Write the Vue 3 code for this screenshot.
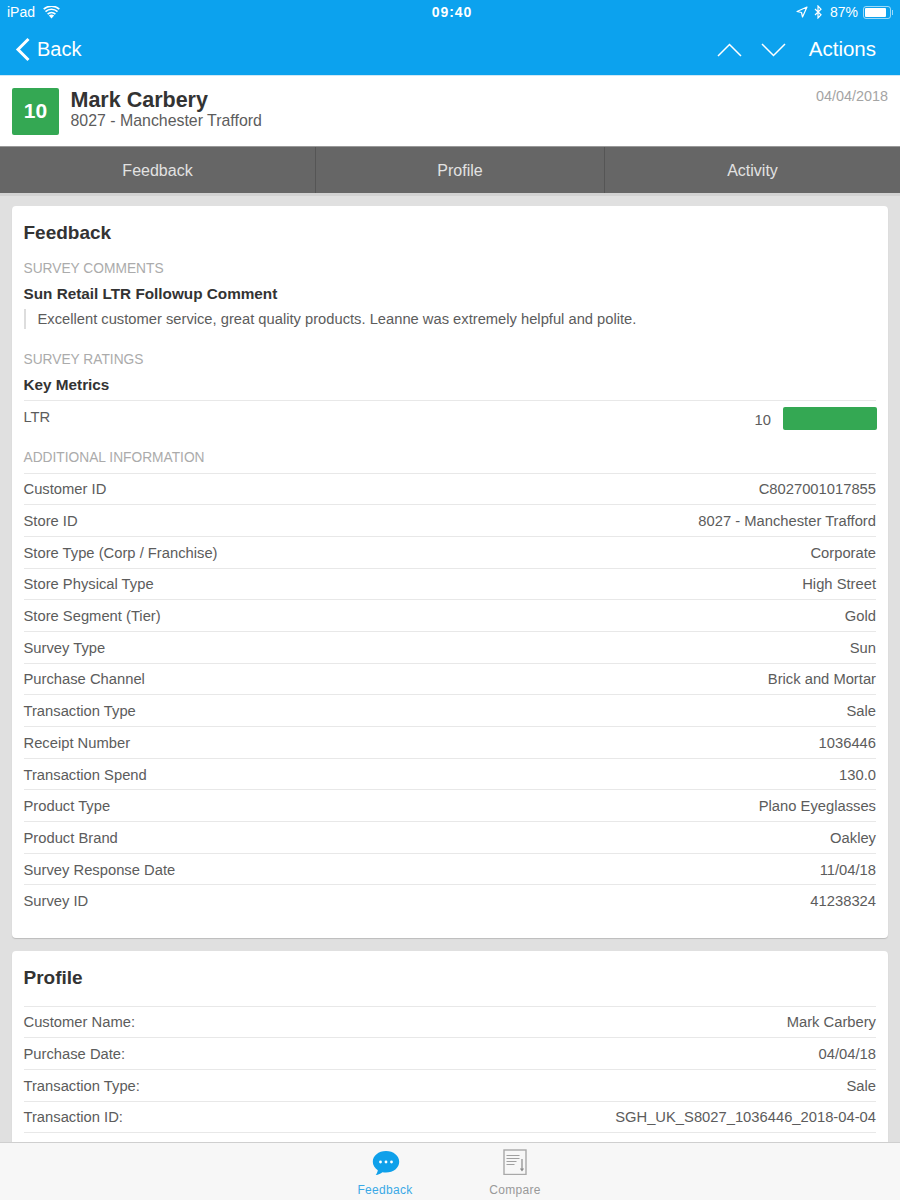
<template>
  <div class="screen">
    <header class="top-bar">
      <div class="status-bar">
        <div class="status-left">
          <span>iPad</span>
          <svg class="wifi" width="17" height="13" viewBox="0 0 17 13">
            <path d="M8.5 12.6 5.900 9.600a3.800 3.800 0 0 1 5.200 0z" fill="#fff" />
            <path d="M4.600 8.100a5.800 5.800 0 0 1 7.800 0M2.500 5.600a8.900 8.900 0 0 1 12 0M.7 3.200a11.600 11.600 0 0 1 15.600 0" fill="none" stroke="#fff" stroke-width="1.600" />
          </svg>
        </div>
        <div class="status-time">09:40</div>
        <div class="status-right">
          <svg width="12" height="12" viewBox="0 0 12 12">
            <path d="M11 1 6.500 11 5.500 6.500 1 5.500z" fill="none" stroke="#fff" stroke-width="1.200" stroke-linejoin="round" />
          </svg>
          <svg width="8" height="14" viewBox="0 0 8 14">
            <path d="M1 4 7 9.800 4 13V1l3 3.200L1 10" fill="none" stroke="#fff" stroke-width="1.200" />
          </svg>
          <span class="battery-text">87%</span>
          <div class="battery">
            <div class="battery-level"></div>
          </div>
          <div class="battery-nub"></div>
        </div>
      </div>
      <nav class="nav-bar">
        <div class="back">
          <svg width="16" height="25" viewBox="0 0 16 25">
            <path d="M13.500 2 3 12.500 13.500 23" fill="none" stroke="#fff" stroke-width="3" />
          </svg>
          <span>Back</span>
        </div>
        <div class="nav-actions">
          <svg width="25" height="14" viewBox="0 0 25 14">
            <path d="M1 13 12.500 1.500 24 13" fill="none" stroke="#fff" stroke-width="1.500" />
          </svg>
          <svg width="25" height="14" viewBox="0 0 25 14">
            <path d="M1 1 12.500 12.500 24 1" fill="none" stroke="#fff" stroke-width="1.500" />
          </svg>
          <span class="actions-label">Actions</span>
        </div>
      </nav>
    </header>

    <section class="person">
      <div class="score">10</div>
      <div class="person-info">
        <h1>Mark Carbery</h1>
        <p>8027 - Manchester Trafford</p>
      </div>
      <div class="person-date">04/04/2018</div>
    </section>

    <div class="tabs">
      <div v-for="tab in tabs" :key="tab.name" class="tab" :class="tab.cls">{{ tab.name }}</div>
    </div>

    <main class="content">
      <section class="card">
        <h2>Feedback</h2>
        <div class="section-label first">SURVEY COMMENTS</div>
        <h3>Sun Retail LTR Followup Comment</h3>
        <blockquote>Excellent customer service, great quality products. Leanne was extremely helpful and polite.</blockquote>
        <div class="section-label ratings">SURVEY RATINGS</div>
        <h3>Key Metrics</h3>
        <div class="metric">
          <span>LTR</span>
          <div class="metric-value">
            <span>10</span>
            <div class="metric-bar"></div>
          </div>
        </div>
        <div class="section-label additional">ADDITIONAL INFORMATION</div>
        <div class="rows">
          <div v-for="row in additional" :key="row[0]" class="row">
            <span>{{ row[0] }}</span>
            <span>{{ row[1] }}</span>
          </div>
        </div>
      </section>

      <section class="card profile">
        <h2>Profile</h2>
        <div class="rows">
          <div v-for="row in profile" :key="row[0]" class="row">
            <span>{{ row[0] }}</span>
            <span>{{ row[1] }}</span>
          </div>
        </div>
      </section>
    </main>

    <footer class="tab-bar">
      <div class="tab-item active">
        <svg class="icon-feedback" width="28" height="26" viewBox="0 0 28 26">
          <path d="M14 1C6.500 1 .8 5.800.8 11.800c0 3.500 2 6.500 5 8.500-.2 1.800-1 3.400-2.100 4.700 2.700-.3 5-1.400 6.700-2.800 1.200.3 2.400.4 3.600.4 7.500 0 13.200-4.800 13.200-10.800S21.500 1 14 1z" fill="#0fa0ea" />
          <circle cx="8.500" cy="12" r="1.400" fill="#fff" />
          <circle cx="14" cy="12" r="1.400" fill="#fff" />
          <circle cx="19.500" cy="12" r="1.400" fill="#fff" />
        </svg>
        <span>Feedback</span>
      </div>
      <div class="tab-item">
        <svg class="icon-compare" width="24" height="26" viewBox="0 0 24 26">
          <rect x="1" y="1" width="22" height="24.500" fill="none" stroke="#a8a8a8" stroke-width="1.400" />
          <path d="M3.500 6.500h13M3.500 9.500h13M3.500 12.500h10M3.500 15.500h8" fill="none" stroke="#a0a0a0" stroke-width="1.200" />
          <path d="M19 10v11M17.500 19.500 19 21.500l1.500-2" fill="none" stroke="#8a8a8a" stroke-width="1.200" />
        </svg>
        <span>Compare</span>
      </div>
    </footer>
  </div>
</template>

<script setup>
const tabs = [
  { name: "Feedback", cls: "tab-first" },
  { name: "Profile", cls: "tab-second" },
  { name: "Activity", cls: "tab-third" },
];

const additional = [
  ["Customer ID", "C8027001017855"],
  ["Store ID", "8027 - Manchester Trafford"],
  ["Store Type (Corp / Franchise)", "Corporate"],
  ["Store Physical Type", "High Street"],
  ["Store Segment (Tier)", "Gold"],
  ["Survey Type", "Sun"],
  ["Purchase Channel", "Brick and Mortar"],
  ["Transaction Type", "Sale"],
  ["Receipt Number", "1036446"],
  ["Transaction Spend", "130.0"],
  ["Product Type", "Plano Eyeglasses"],
  ["Product Brand", "Oakley"],
  ["Survey Response Date", "11/04/18"],
  ["Survey ID", "41238324"],
];

const profile = [
  ["Customer Name:", "Mark Carbery"],
  ["Purchase Date:", "04/04/18"],
  ["Transaction Type:", "Sale"],
  ["Transaction ID:", "SGH_UK_S8027_1036446_2018-04-04"],
  ["Transaction Spend:", "130.0"],
];
</script>

<style>
html,
body {
  margin: 0;
  background: #e0e0e0;
}
</style>

<style scoped>
.screen {
  position: relative;
  width: 900px;
  height: 1200px;
  overflow: hidden;
  background: #e0e0e0;
  font-family: "Liberation Sans", Arial, sans-serif;
  color: #5c5c5c;
}

.top-bar {
  height: 75px;
  background: #0ca2ee;
  color: #fff;
  border-bottom: 1px solid #cfe8f6;
}

.status-bar {
  height: 24px;
  padding: 0 7px;
  display: grid;
  grid-template-columns: 1fr auto 1fr;
  align-items: center;
  font-size: 14px;
}

.status-left {
  display: flex;
  align-items: center;
  gap: 8px;
}

.status-time {
  font-weight: 700;
  font-size: 14px;
  letter-spacing: 0.9px;
  padding-left: 4px;
}

.status-right {
  display: flex;
  justify-content: flex-end;
  align-items: center;
  gap: 6px;
}

.battery-text {
  margin-left: 2px;
}

.battery {
  width: 28px;
  height: 13px;
  box-sizing: border-box;
  border: 1px solid rgba(255, 255, 255, 0.6);
  border-radius: 3px;
  padding: 1px;
  margin-left: -1px;
}

.battery-level {
  width: 87%;
  height: 100%;
  background: #fff;
  border-radius: 1px;
}

.battery-nub {
  width: 1px;
  height: 5px;
  margin-left: -5px;
  background: rgba(255, 255, 255, 0.6);
}

.nav-bar {
  height: 51px;
  padding: 0 24px 0 15px;
  display: flex;
  justify-content: space-between;
  align-items: center;
  font-size: 20px;
}

.back {
  display: flex;
  align-items: center;
  gap: 6px;
}

.nav-actions {
  display: flex;
  align-items: center;
  gap: 19px;
}

.actions-label {
  margin-left: 4px;
  padding-bottom: 1px;
  font-size: 20.5px;
}

.person {
  height: 70px;
  background: #fff;
  display: flex;
  align-items: center;
  padding: 0 12px;
  position: relative;
  border-bottom: 1px solid #999;
}

.score {
  width: 47px;
  height: 47px;
  border-radius: 2px;
  background: #34a853;
  color: #fff;
  font-size: 21px;
  font-weight: 700;
  display: flex;
  align-items: center;
  justify-content: center;
}

.person-info {
  margin-left: 11.500px;
  padding-bottom: 2px;
}

.person-info h1 {
  margin: 0;
  font-size: 21.500px;
  line-height: 22px;
  color: #333;
}

.person-info p {
  margin: 0;
  font-size: 15.900px;
  line-height: 20px;
  color: #5c5c5c;
}

.person-date {
  position: absolute;
  top: 12px;
  right: 12px;
  font-size: 14.400px;
  color: #a4a4a4;
}

.tabs {
  height: 46px;
  background: #666;
  display: flex;
  color: #e2e2e2;
  font-size: 16px;
  border-bottom: 3px solid #d2d2d2;
}

.tab {
  display: flex;
  align-items: center;
  justify-content: center;
  padding-top: 1px;
  box-sizing: border-box;
  border-right: 1px solid #555;
}

.tab-first {
  width: 316px;
}

.tab-second {
  width: 289px;
}

.tab-third {
  flex: 1;
  border-right: 0;
}

.content {
  padding: 10px 12px 0;
  display: flex;
  flex-direction: column;
  gap: 13px;
}

.card {
  background: #fff;
  border-radius: 4px;
  padding: 0 12px 0 11.500px;
  box-shadow: 0 1px 1px #bcbcbc;
  height: 732px;
  box-sizing: border-box;
}

.card.profile {
  height: 400px;
}

.card h2 {
  margin: 0;
  padding-top: 15px;
  font-size: 19px;
  line-height: 24px;
  color: #333;
}

.section-label {
  font-size: 13.750px;
  line-height: 18px;
  color: #ababab;
}

.section-label.first {
  margin-top: 15px;
}

.section-label.ratings {
  margin-top: 22px;
}

.section-label.additional {
  margin-top: 11px;
}

.card h3 {
  margin: 7px 0 0;
  font-size: 15.300px;
  line-height: 18px;
  color: #333;
}

blockquote {
  margin: 6px 0 0;
  padding-left: 12px;
  border-left: 2px solid #ddd;
  font-size: 14.730px;
  line-height: 20px;
  color: #5c5c5c;
}

.metric {
  margin-top: 6px;
  border-top: 1px solid #e8e8e8;
  height: 38px;
  display: flex;
  justify-content: space-between;
  align-items: flex-start;
  font-size: 14.750px;
  padding-top: 5px;
  box-sizing: border-box;
  line-height: 20px;
}

.metric > span {
  padding-top: 1px;
}

.metric-value {
  display: flex;
  align-items: center;
  gap: 12px;
  margin-right: -1px;
}

.metric-value span {
  padding-top: 4px;
}

.metric-bar {
  width: 94px;
  height: 23px;
  border-radius: 2px;
  background: #34a853;
}

.rows {
  margin-top: 5.500px;
}

.profile .rows {
  margin-top: 15.500px;
}

.row {
  height: 31.700px;
  box-sizing: border-box;
  border-top: 1px solid #e8e8e8;
  padding-top: 1px;
  display: flex;
  justify-content: space-between;
  align-items: center;
  font-size: 14.750px;
}

.tab-bar {
  position: absolute;
  left: 0;
  right: 0;
  bottom: 0;
  height: 58px;
  box-sizing: border-box;
  background: #f7f7f7;
  border-top: 1px solid #cfcfcf;
  display: flex;
  justify-content: center;
  gap: 52px;
}

.tab-item {
  width: 78px;
  display: flex;
  flex-direction: column;
  align-items: center;
  justify-content: flex-end;
  padding-bottom: 3px;
  font-size: 12px;
  letter-spacing: 0.3px;
  color: #999;
  gap: 5px;
}

.tab-item.active {
  color: #3aa9e6;
}

.icon-feedback {
  margin: 0 0 2px 1px;
}

.icon-compare {
  margin: 0 1px 3px 0;
}
</style>
